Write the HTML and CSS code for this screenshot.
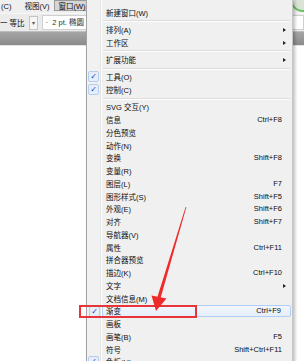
FILE: index.html
```html
<!DOCTYPE html>
<html>
<head>
    <title>窗口菜单</title>
    <meta charset="utf-8">
    <link rel="stylesheet" href="styles.css">
</head>
<body>
    <div class="screen">
        <div class="app">
            <div class="menubar">
                <span class="menubar-item">(C)</span>
                <span class="menubar-item">视图(V)</span>
                <span class="menubar-item open">窗口(W)</span>
                <span class="badge"></span>
            </div>
            <div class="toolbar">
                <span class="ratio">一 等比</span>
                <span class="drop">▾</span>
                <div class="field">·&nbsp; 2 pt. 椭圆</div>
                <div class="field small">i</div>
            </div>
            <div class="band"></div>
            <div class="canvas"></div>
        </div>

        <!-- Window menu -->
        <div class="menu">
            <div class="item">新建窗口(W)</div>
            <div class="sep"></div>
            <div class="item sub">排列(A)</div>
            <div class="item sub">工作区</div>
            <div class="sep"></div>
            <div class="item sub">扩展功能</div>
            <div class="sep"></div>
            <div class="item checked">工具(O)</div>
            <div class="item checked">控制(C)</div>
            <div class="sep"></div>
            <div class="item">SVG 交互(Y)</div>
            <div class="item">信息<span class="key">Ctrl+F8</span></div>
            <div class="item">分色预览</div>
            <div class="item">动作(N)</div>
            <div class="item">变换<span class="key">Shift+F8</span></div>
            <div class="item">变量(R)</div>
            <div class="item">图层(L)<span class="key">F7</span></div>
            <div class="item">图形样式(S)<span class="key">Shift+F5</span></div>
            <div class="item">外观(E)<span class="key">Shift+F6</span></div>
            <div class="item">对齐<span class="key">Shift+F7</span></div>
            <div class="item">导航器(V)</div>
            <div class="item">属性<span class="key">Ctrl+F11</span></div>
            <div class="item">拼合器预览</div>
            <div class="item">描边(K)<span class="key">Ctrl+F10</span></div>
            <div class="item sub">文字</div>
            <div class="item">文档信息(M)</div>
            <div class="item checked active">渐变<span class="key">Ctrl+F9</span></div>
            <div class="item">画板</div>
            <div class="item">画笔(B)<span class="key">F5</span></div>
            <div class="item">符号<span class="key">Shift+Ctrl+F11</span></div>
            <div class="item checked">色板(H)</div>
        </div>

        <div class="mark"></div>
        <svg class="arrow" width="304" height="361" viewBox="0 0 304 361">
            <polygon points="185.6,207 186.4,207 160.6,298 157.4,297" fill="#ee2a2a"/>
            <polygon points="151.5,295.5 166.5,298.5 156,311" fill="#ee2a2a"/>
        </svg>
    </div>
</body>
</html>
```

FILE: styles.css
```css
body {
    margin: 0;
    background: #fff;
}
.screen {
    position: relative;
    width: 304px;
    height: 361px;
    overflow: hidden;
    font-family: "Liberation Sans", "Noto Sans CJK SC", sans-serif;
    font-size: 7.5px;
    color: #0d0d0d;
}
.menubar {
    height: 13px;
    background: #efefef;
    display: flex;
    align-items: flex-start;
}
.menubar-item {
    height: 11px;
    line-height: 11px;
    padding: 0 3px;
    border: 1px solid transparent;
    box-sizing: border-box;
}
.menubar-item:first-child {
    padding: 0 8px 0 0;
}
.menubar-item.open {
    background: #d6d6d6;
    border-color: #9a9a9a;
    margin-left: 1px;
    padding: 0 3px 0 3px;
}
.badge {
    margin-left: auto;
    margin-top: -14px;
    margin-right: -12px;
    width: 22px;
    height: 22px;
    border-radius: 50%;
    border: 2px solid #6cbf63;
    background: #d9e4d7;
}
.toolbar {
    height: 18px;
    background: #ebebeb;
    display: flex;
    align-items: center;
    border-top: 1px solid #f7f7f7;
    box-sizing: border-box;
}
.ratio {
    padding-right: 4px;
}
.drop {
    width: 7px;
    height: 12px;
    border: 1px solid #c4c4c4;
    background: #f6f6f6;
    font-size: 6px;
    line-height: 12px;
    text-align: center;
    color: #555;
}
.field {
    margin-left: 4px;
    height: 13px;
    line-height: 13px;
    padding-left: 3px;
    width: 120px;
    background: #fff;
    border: 1px solid #d0d0d0;
    color: #333;
    white-space: nowrap;
}
.field.small {
    margin-left: auto;
    width: 20px;
    padding-left: 6px;
    font-weight: bold;
}
.band {
    height: 13px;
    background: linear-gradient(#a5a5a5, #8b8b8b);
    border-top: 1px solid #bdbdbd;
}
.canvas {
    height: 316px;
    background: #fff;
    border-top: 1px solid #e4e4e4;
}

/* dropdown menu */
.menu {
    position: absolute;
    left: 86px;
    top: 0;
    width: 207px;
    height: 370px;
    box-sizing: border-box;
    padding-top: 6px;
    background: linear-gradient(to right, #f1f1f1 0 13px, #e2e3e3 13px 14px, #fff 14px 15px, #f0f0f0 15px);
    border-left: 1px solid #a3a3a3;
    border-right: 1px solid #c6c6c6;
    box-shadow: 2px 0 3px rgba(0,0,0,0.25);
}
.item {
    position: relative;
    height: 12.75px;
    display: flex;
    align-items: center;
    padding-left: 19px;
    padding-right: 10px;
    white-space: nowrap;
}
.key {
    margin-left: auto;
}
.sub::after {
    content: "";
    position: absolute;
    right: 6px;
    top: 4.5px;
    border-left: 3px solid #222;
    border-top: 2px solid transparent;
    border-bottom: 2px solid transparent;
}
.checked::before {
    content: "✓";
    position: absolute;
    left: 1px;
    top: 0.5px;
    width: 11px;
    height: 11px;
    box-sizing: border-box;
    border: 1px solid #b3cff0;
    border-radius: 2px;
    background: #e6eefa;
    color: #2240b0;
    font-family: "DejaVu Sans", sans-serif;
    font-size: 8px;
    line-height: 9px;
    text-align: center;
}
.item.active {
    margin-left: 15px;
    margin-right: 1px;
    padding-left: 3px;
    padding-right: 9px;
    box-sizing: border-box;
    background: linear-gradient(#f3f7fd, #e5eefa);
    border: 1px solid #aecff7;
    border-radius: 2px;
}
.item.active::before {
    left: -14px;
    top: 0;
}
.sep {
    position: relative;
    height: 4.5px;
}
.sep::after {
    content: "";
    position: absolute;
    left: 16px;
    right: 2px;
    top: 1.5px;
    border-top: 1px solid #dcdcdc;
    border-bottom: 1px solid #fff;
}

/* annotation */
.mark {
    position: absolute;
    left: 79px;
    top: 305px;
    width: 118px;
    height: 13px;
    box-sizing: border-box;
    border: 2px solid #e8353a;
}
.arrow {
    position: absolute;
    left: 0;
    top: 0;
}
```
